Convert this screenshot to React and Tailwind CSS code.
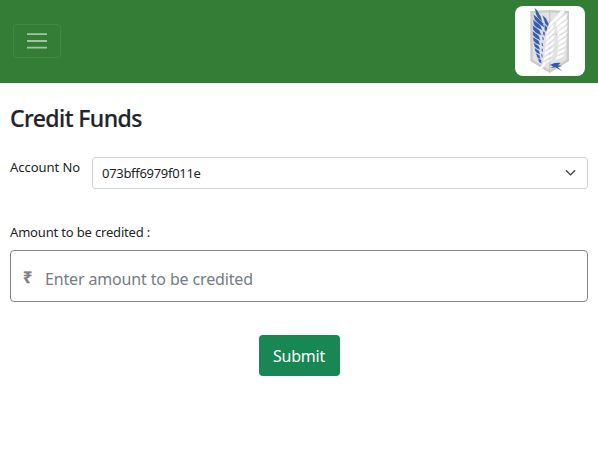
import React from "react";

// Feathers of the crest, each wing from the top down
const outerBlue = [
  "M89 23 L98 32 L108 50 L114 72 L100 58 L92 42 Z",
  "M84 41 L98 53 L115 70 L119 84 L98 70 L88 58 Z",
  "M83 58 L106 75 L114 92 L94 83 L86 74 Z",
  "M82 75 L104 91 L110 107 L92 99 L84 89 Z",
  "M82 92 L102 107 L107 122 L92 115 L84 106 Z",
  "M83 110 L102 122 L106 136 L93 131 L85 122 Z",
  "M85 127 L102 138 L106 150 L95 146 L88 139 Z",
  "M88 143 L103 152 L106 164 L96 160 L90 153 Z",
  "M91 158 L104 166 L107 178 L98 175 Z",
  "M98 175 L109 179 L110 191 L102 187 Z",
];
const innerBlue = [
  "M111 44 L123 54 L132 72 L131 83 L120 71 Z",
  "M118 72 L129 84 L123 98 L118 88 Z",
  "M113 92 L120 97 L120 109 L114 104 Z",
  "M111 109 L116 112 L117 123 L112 118 Z",
  "M109 127 L114 130 L115 141 L110 137 Z",
  "M109 144 L114 147 L114 157 L110 154 Z",
  "M108 160 L113 164 L113 174 L109 171 Z",
];
const outerWhite = [
  "M180 23 L177 39 L151 66 L143 62 L164 37 Z",
  "M188 40 L184 55 L152 82 L153 67 Z",
  "M189 58 L185 72 L154 96 L157 80 Z",
  "M189 76 L184 89 L156 110 L159 95 Z",
  "M189 93 L183 106 L157 124 L160 110 Z",
  "M187 110 L182 123 L158 138 L161 125 Z",
  "M186 127 L180 139 L157 152 L161 140 Z",
  "M184 144 L177 156 L155 166 L159 155 Z",
  "M181 161 L172 172 L150 180 L156 169 Z",
];
const innerWhite = [
  "M158 43 L150 64 L126 91 L132 72 Z",
  "M148 69 L144 85 L123 107 L125 93 Z",
  "M152 83 L146 100 L121 123 L124 108 Z",
  "M152 101 L145 117 L120 139 L123 124 Z",
  "M152 119 L144 134 L118 154 L121 140 Z",
  "M151 137 L143 151 L116 170 L120 156 Z",
  "M150 155 L141 168 L113 184 L118 172 Z",
  "M147 173 L133 185 L109 199 L116 187 Z",
];

function Logo() {
  return (
    <svg viewBox="30 18 210 210" className="block size-[70px]" aria-hidden="true">
      <path d="M76 33 L134 30 L192 33 V183 L134 219 L76 183 Z" fill="#cbcbcc" />
      <path d="M83 40 L134 37 L185 40 V179 L134 210 L83 179 Z" fill="#e2e2e4" />
      <path d="M134 36 V210 M83 103 H185" stroke="#c9c9cb" strokeWidth="4" />
      <g fill="#fff" stroke="#e2e2e4" strokeWidth="0.8">
        {outerWhite.map((d) => <path key={d} d={d} />)}
      </g>
      <g fill="#3a5dab" stroke="#f2f4f8" strokeWidth="1.2">
        {outerBlue.map((d) => <path key={d} d={d} />)}
        {innerBlue.map((d) => <path key={d} d={d} />)}
      </g>
      <g fill="#fff" stroke="#dadade" strokeWidth="0.9">
        {innerWhite.map((d) => <path key={d} d={d} />)}
        <path d="M93 220 L108 199 L124 184 L119 198 Z" />
      </g>
      <path d="M134 195 L149 189 L167 188 L159 196 L172 198 L158 201 L172 214 L151 202 L136 204 L145 199 Z" fill="#3458a8" />
    </svg>
  );
}

export default function App() {
  return (
    <div className="h-[459px] w-full overflow-hidden bg-white font-['Noto_Sans',sans-serif] text-[#212529]">
      <header className="flex h-[83px] items-start justify-between bg-[#337d37] pl-[13px] pr-[13px] pt-[6px]">
        <button aria-label="Menu" className="mt-[18px] flex h-[34px] w-[48px] items-center justify-center rounded-[4px] border border-[#44894a]">
          <svg viewBox="0 0 22 22" className="size-[22px]" stroke="#a1c5a1" strokeWidth="1.8">
            <path d="M1 4.2H21M1 11H21M1 17.7H21" />
          </svg>
        </button>
        <div className="size-[70px] overflow-hidden rounded-[8px] bg-white">
          <Logo />
        </div>
      </header>
      <main className="px-[10px]">
        <h1 className="pt-[20px] text-[23px] font-medium leading-[30px] tracking-[-0.58px] [-webkit-text-stroke:0.2px_#212529]">Credit Funds</h1>
        <div className="mt-[24px] flex h-[32px]">
          <label className="w-[82px] shrink-0 whitespace-nowrap text-[13px] leading-[21px] tracking-[-0.05px]">Account No</label>
          <div className="flex flex-1 items-center justify-between rounded-[3px] border border-[#ced4da] pl-[9px] pr-[11px]">
            <span className="pt-px text-[13px] tracking-[-0.3px] [font-variant-ligatures:none]">073bff6979f011e</span>
            <svg viewBox="0 0 16 16" className="size-[11px]" fill="none" stroke="#343a40" strokeWidth="2" strokeLinecap="round" strokeLinejoin="round">
              <path d="m2 4 6 6 6-6" />
            </svg>
          </div>
        </div>
        <label className="mt-[33px] block text-[13px] leading-[21px] tracking-[-0.17px]">Amount to be credited :</label>
        <div className="mt-[7px] flex h-[52px] items-center rounded-[4px] border border-[#85829b] pl-[12px]">
          <span className="w-[22px] pt-[2px] text-[16px] font-bold leading-[20px] text-[#808080] [-webkit-text-stroke:0.4px_#808080]">₹</span>
          <span className="pt-[6px] text-[16px] leading-[24px] tracking-[-0.15px] text-[#757c83]">Enter amount to be credited</span>
        </div>
        <div className="mt-[33px] flex justify-center">
          <button className="h-[41px] w-[81px] rounded-[4px] bg-[#198754] text-[16px] tracking-[-0.2px] text-white">Submit</button>
        </div>
      </main>
    </div>
  );
}
